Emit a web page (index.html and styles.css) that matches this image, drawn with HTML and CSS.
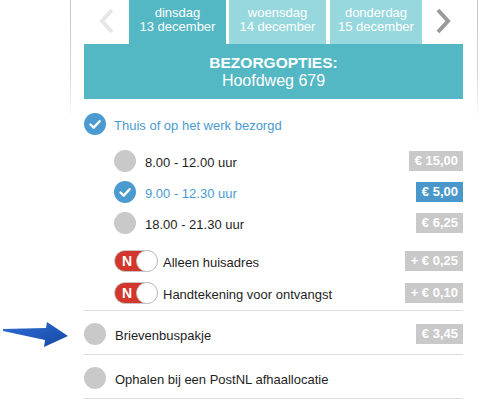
FILE: index.html
```html
<!DOCTYPE html>
<html lang="nl">
<head>
<meta charset="utf-8">
<link rel="stylesheet" href="styles.css">
</head>
<body>
<svg class="pointer" width="72" height="32" viewBox="0 0 72 32">
  <defs>
    <linearGradient id="ag" x1="0" y1="0" x2="1" y2="1">
      <stop offset="0" stop-color="#2c6fd6"/>
      <stop offset="1" stop-color="#1747a3"/>
    </linearGradient>
  </defs>
  <polygon points="3,11 46,10 47,4 68,18 44,29 45,22 3,13" fill="url(#ag)"/>
</svg>
<div class="panel">
  <div class="days">
    <button class="nav prev"><svg width="16" height="26" viewBox="0 0 16 26"><polyline points="13,2 3,13 13,24" fill="none" stroke="#e6e6e6" stroke-width="4"/></svg></button>
    <div class="day active"><span>dinsdag</span><span>13 december</span></div>
    <div class="day second"><span>woensdag</span><span>14 december</span></div>
    <div class="day third"><span>donderdag</span><span>15 december</span></div>
    <button class="nav next"><svg width="16" height="26" viewBox="0 0 16 26"><polyline points="3,2 13,13 3,24" fill="none" stroke="#9a9a9a" stroke-width="4"/></svg></button>
  </div>
  <div class="banner">
    <strong>BEZORGOPTIES:</strong>
    <span>Hoofdweg 679</span>
  </div>
  <div class="main-option">
    <span class="radio checked"><svg width="22" height="22" viewBox="0 0 22 22"><polyline points="6.5,11.5 9.7,14.6 15.6,8.2" fill="none" stroke="#fff" stroke-width="2.4" stroke-linecap="round" stroke-linejoin="round"/></svg></span>
    <span class="label blue">Thuis of op het werk bezorgd</span>
  </div>
  <ul class="slots">
    <li class="slot"><span class="radio"></span><span class="label">8.00 - 12.00 uur</span><span class="price">€ 15,00</span></li>
    <li class="slot"><span class="radio checked"><svg width="22" height="22" viewBox="0 0 22 22"><polyline points="6.5,11.5 9.7,14.6 15.6,8.2" fill="none" stroke="#fff" stroke-width="2.4" stroke-linecap="round" stroke-linejoin="round"/></svg></span><span class="label blue">9.00 - 12.30 uur</span><span class="price active">€ 5,00</span></li>
    <li class="slot"><span class="radio"></span><span class="label">18.00 - 21.30 uur</span><span class="price">€ 6,25</span></li>
    <li class="extra first"><span class="toggle"><span class="n">N</span><span class="knob"></span></span><span class="label">Alleen huisadres</span><span class="price">+ € 0,25</span></li>
    <li class="extra"><span class="toggle"><span class="n">N</span><span class="knob"></span></span><span class="label">Handtekening voor ontvangst</span><span class="price">+ € 0,10</span></li>
  </ul>
  <div class="bottom-option">
    <span class="radio"></span><span class="label">Brievenbuspakje</span><span class="price">€ 3,45</span>
  </div>
  <div class="bottom-option last">
    <span class="radio"></span><span class="label">Ophalen bij een PostNL afhaallocatie</span>
  </div>
</div>
</body>
</html>
```
FILE: styles.css
```css
* { box-sizing: border-box; }
html, body { margin: 0; padding: 0; background: #fff; }
body {
  position: relative;
  width: 485px;
  height: 403px;
  overflow: hidden;
  font-family: "Liberation Sans", Arial, sans-serif;
  font-size: 13px;
  color: #1e1e1e;
}
.pointer {
  position: absolute;
  left: 0;
  top: 318px;
}
.panel {
  position: relative;
  margin-left: 70px;
  width: 408px;
  padding: 0 15px 0 14px;
}
.panel::before,
.panel::after {
  content: "";
  position: absolute;
  top: 0;
  width: 1px;
  height: 120px;
  background: linear-gradient(#c8c8c8, #d4d4d4 60%, rgba(230,230,230,0));
}
.panel::before { left: 0; }
.panel::after { right: 0; }

.days {
  display: flex;
  height: 44px;
}
.nav {
  border: 0;
  background: none;
  padding: 0;
  display: flex;
  align-items: center;
  justify-content: center;
  padding-bottom: 2px;
}
.prev { width: 45px; }
.next { flex: 1; }
.day {
  width: 97px;
  display: flex;
  flex-direction: column;
  align-items: center;
  justify-content: center;
  padding-bottom: 4px;
  background: #97d8de;
  color: #fff;
  line-height: 14px;
  font-size: 13px;
}
.day.active { background: #53b8c4; }
.day.second { margin-left: 3px; }
.day.third { margin-left: 4px; width: 92px; }

.banner {
  height: 55px;
  background: #53b8c4;
  color: #fff;
  display: flex;
  flex-direction: column;
  align-items: center;
  justify-content: center;
  line-height: 18px;
}
.banner strong { font-size: 15.5px; font-weight: bold; }
.banner span { font-size: 16px; }

.radio {
  flex: none;
  width: 22px;
  height: 22px;
  border-radius: 50%;
  background: #c9c9c9;
  display: flex;
}
.radio.checked { background: #4b9bd0; }
.label { padding-top: 3px; }
.blue { color: #4b9bd0; }

.main-option {
  margin-top: 14px;
  height: 22px;
  display: flex;
  align-items: center;
  gap: 8px;
}

.slots {
  list-style: none;
  margin: 10px 0 0 30px;
  padding: 0;
}
.slot, .extra {
  display: flex;
  align-items: center;
  height: 31px;
  gap: 9px;
}
.extra { height: 32px; gap: 5px; }
.extra.first { margin-top: 7px; }

.price {
  margin-left: auto;
  background: #c9c9c9;
  color: #fff;
  font-weight: bold;
  font-size: 13px;
  height: 20px;
  line-height: 20px;
  padding: 0 5px 0 6px;
}
.price.active { background: #4a98cb; }

.toggle {
  position: relative;
  flex: none;
  width: 44px;
  height: 22px;
  border-radius: 11px;
  background: #d2362d;
  border: 1px solid #c4c4c4;
}
.toggle .n {
  position: absolute;
  left: 7px;
  top: 0;
  line-height: 20px;
  color: #fff;
  font-weight: bold;
  font-size: 14px;
}
.toggle .knob {
  position: absolute;
  right: -1px;
  top: -1px;
  width: 22px;
  height: 22px;
  border-radius: 50%;
  background: #fff;
  border: 1px solid #c4c4c4;
}

.bottom-option {
  display: flex;
  align-items: center;
  gap: 9px;
  border-top: 1px solid #dcdcdc;
  padding: 12px 0 9px;
  margin-top: 1px;
}
.bottom-option.last {
  margin-top: 0;
  border-bottom: 1px solid #dcdcdc;
}
```
